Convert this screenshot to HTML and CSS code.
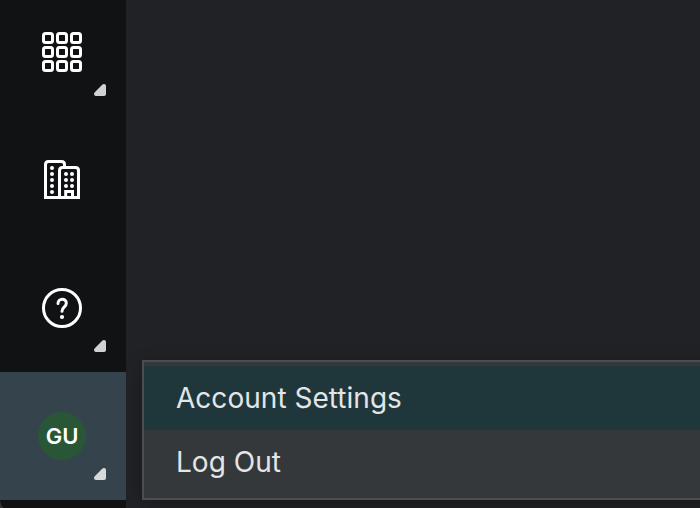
FILE: index.html
```
<!DOCTYPE html>
<html lang="en">
<head>
<meta charset="utf-8">
<title>Account menu</title>
<link rel="stylesheet" href="styles.css">
</head>
<body>
<div class="app">
  <nav class="sidebar">
    <a class="nav-item">
      <svg class="icon" viewBox="0 0 40 40">
        <g fill="none" stroke="#fff" stroke-width="3">
          <rect x="1.5" y="1.5" width="9" height="9" rx="2"/><rect x="15.5" y="1.5" width="9" height="9" rx="2"/><rect x="29.5" y="1.5" width="9" height="9" rx="2"/>
          <rect x="1.5" y="15.5" width="9" height="9" rx="2"/><rect x="15.5" y="15.5" width="9" height="9" rx="2"/><rect x="29.5" y="15.5" width="9" height="9" rx="2"/>
          <rect x="1.5" y="29.5" width="9" height="9" rx="2"/><rect x="15.5" y="29.5" width="9" height="9" rx="2"/><rect x="29.5" y="29.5" width="9" height="9" rx="2"/>
        </g>
      </svg>
      <svg class="corner" viewBox="0 0 12 12"><path d="M8.200 .8Q9 0 10 0Q12 0 12 2V10Q12 12 10 12H2Q0 12 0 10Q0 9 .8 8.200Z"/></svg>
    </a>
    <a class="nav-item">
      <svg class="icon" viewBox="0 0 40 40">
        <g fill="none" stroke="#fff" stroke-width="3">
          <path d="M3.500 37.500V4.500Q3.500 1.500 6.500 1.500H19.500Q22.500 1.500 22.500 4.500V7"/>
          <path d="M17.500 37.500V10.500Q17.500 7.500 20.500 7.500H33.500Q36.500 7.500 36.500 10.500V37.500M2 37.500H38"/>
          <path d="M23.700 37.500V31.500H30.500V37.500"/>
        </g>
        <g fill="#fff">
          <circle cx="10" cy="8" r="2"/><circle cx="10" cy="14" r="2"/><circle cx="10" cy="20" r="2"/><circle cx="10" cy="26" r="2"/><circle cx="10" cy="32" r="2"/>
          <circle cx="24" cy="14" r="2"/><circle cx="24" cy="20" r="2"/><circle cx="24" cy="26" r="2"/>
          <circle cx="30" cy="14" r="2"/><circle cx="30" cy="20" r="2"/><circle cx="30" cy="26" r="2"/>
        </g>
      </svg>
    </a>
    <a class="nav-item">
      <svg class="icon" viewBox="0 0 40 40">
        <g fill="none" stroke="#fff" stroke-width="3" stroke-linecap="round" stroke-linejoin="round">
          <circle cx="20" cy="20" r="18.500"/>
          <path d="M16 15.500C16 9.800 24.300 9.800 24.300 15.300C24.300 19 20 18.800 20 23.300"/>
        </g>
        <circle cx="20" cy="29" r="2.100" fill="#fff"/>
      </svg>
      <svg class="corner" viewBox="0 0 12 12"><path d="M8.200 .8Q9 0 10 0Q12 0 12 2V10Q12 12 10 12H2Q0 12 0 10Q0 9 .8 8.200Z"/></svg>
    </a>
    <a class="nav-item active">
      <span class="avatar">GU</span>
      <svg class="corner" viewBox="0 0 12 12"><path d="M8.200 .8Q9 0 10 0Q12 0 12 2V10Q12 12 10 12H2Q0 12 0 10Q0 9 .8 8.200Z"/></svg>
    </a>
  </nav>
  <main class="content"></main>
  <div class="menu">
    <a class="menu-item selected">Account Settings</a>
    <a class="menu-item">Log Out</a>
  </div>
</div>
</body>
</html>
```
FILE: styles.css
```
body {
  margin: 0;
  background: #35353a;
  font-family: Inter, "Liberation Sans", sans-serif;
}
.app {
  position: relative;
  display: flex;
  height: 508px;
  overflow: hidden;
}
.sidebar {
  width: 126px;
  height: 500px;
  padding-bottom: 8px;
  border-bottom-left-radius: 4px 10px;
  background: #111214;
  display: flex;
  flex-direction: column;
  justify-content: flex-end;
}
.nav-item {
  position: relative;
  flex: 0 0 128px;
  display: flex;
  align-items: center;
  padding-left: 42px;
}
.active {
  background: #35444c;
}
.icon {
  width: 40px;
  height: 40px;
}
.corner {
  position: absolute;
  right: 20px;
  bottom: 20px;
  width: 12px;
  height: 12px;
  fill: #d0d1d1;
}
.active .corner {
  fill: #d7dadb;
}
.avatar {
  width: 48px;
  height: 48px;
  margin-left: -4px;
  border-radius: 50%;
  background: #285637;
  color: #fff;
  font-size: 22px;
  font-weight: 600;
  line-height: 48px;
  text-align: center;
}
.content {
  flex: 1;
  background: #212225;
}
.menu {
  position: absolute;
  left: 142px;
  top: 360px;
  width: 600px;
  padding: 4px 0;
  border: 2px solid #4a4d51;
  background: #34383b;
  box-shadow: 0 4px 16px rgba(0, 0, 0, .25);
}
.menu-item {
  display: block;
  height: 64px;
  padding-left: 32px;
  color: #e3e5e7;
  font-size: 28px;
  letter-spacing: .03px;
  line-height: 64px;
}
.selected {
  background: #1f363b;
}
```
